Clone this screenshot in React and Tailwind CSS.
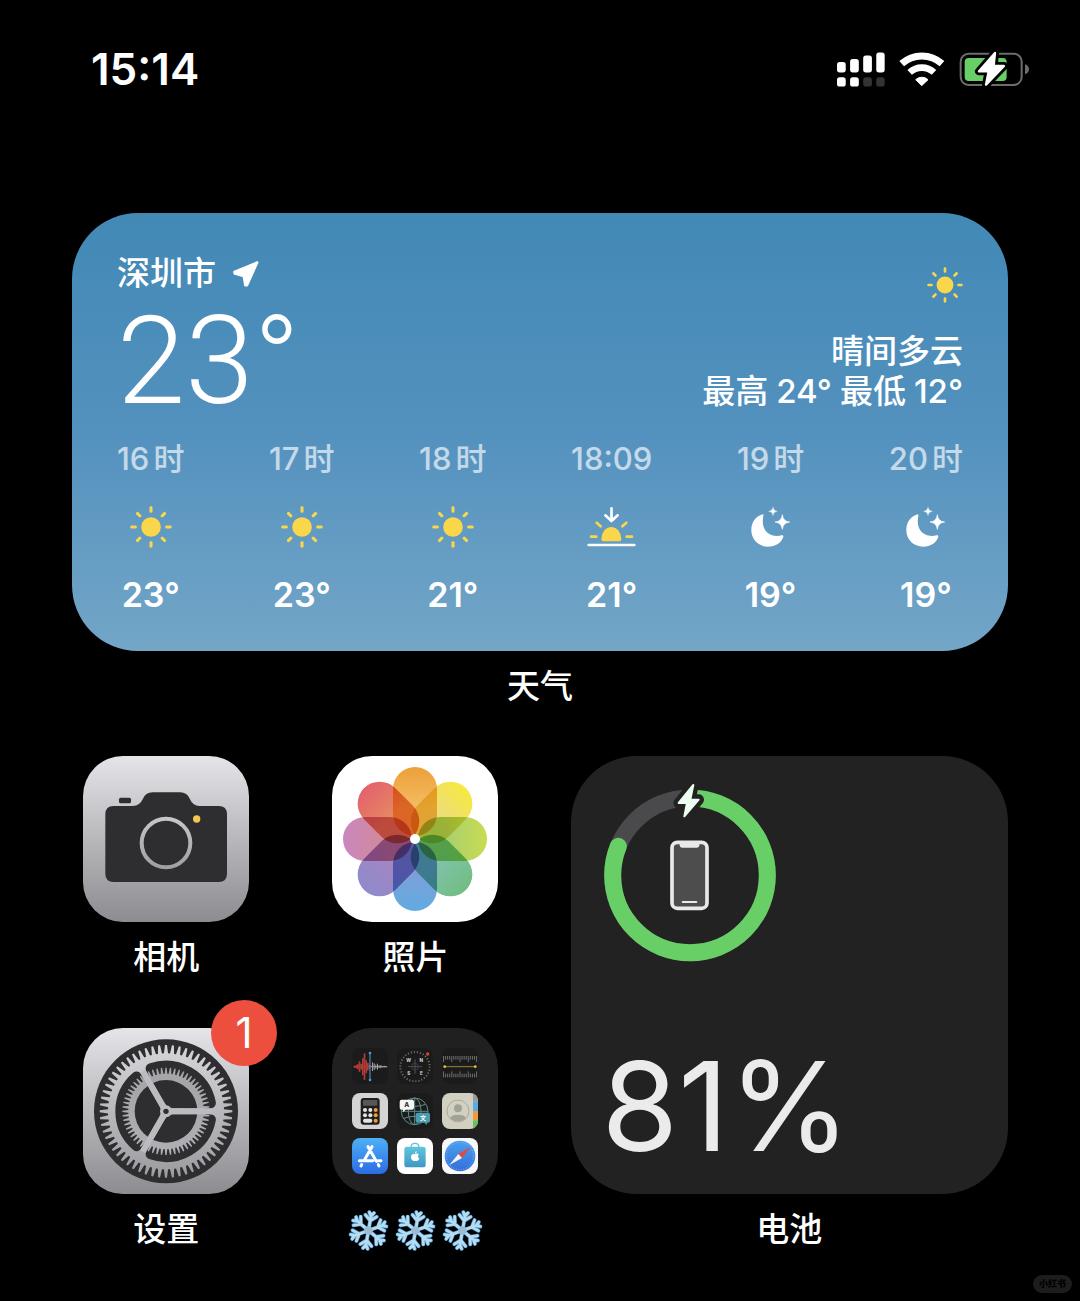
import React from "react";

const polar = (cx, cy, r, deg) => {
  const a = (deg * Math.PI) / 180;
  return `${(cx + r * Math.cos(a)).toFixed(1)} ${(cy + r * Math.sin(a)).toFixed(1)}`;
};

// Closed outline of a toothed wheel.
function gearPath(cx, cy, rBase, rTip, teeth) {
  const step = 360 / teeth;
  const pts = [];
  for (let i = 0; i < teeth; i++) {
    const a = i * step;
    pts.push(polar(cx, cy, rBase, a - step * 0.34));
    pts.push(polar(cx, cy, rTip, a - step * 0.14));
    pts.push(polar(cx, cy, rTip, a + step * 0.14));
    pts.push(polar(cx, cy, rBase, a + step * 0.34));
  }
  return `M${pts.join("L")}Z`;
}

function Signal() {
  return (
    <svg viewBox="51 65 143 104" className="h-[35px] w-12" fill="#fff" aria-label="蜂窝信号">
      <rect x="51" y="95" width="26" height="31" rx="8" />
      <rect x="90" y="86" width="26" height="40" rx="8" />
      <rect x="129" y="75" width="26" height="51" rx="8" />
      <rect x="168" y="66" width="25" height="60" rx="8" />
      <rect x="51" y="140" width="26" height="28" rx="8" />
      <rect x="90" y="140" width="26" height="28" rx="8" />
      <rect x="129" y="140" width="26" height="28" rx="8" fill="#333" />
      <rect x="168" y="140" width="25" height="28" rx="8" fill="#333" />
    </svg>
  );
}

function Wifi() {
  return (
    <svg viewBox="238 60 138 105" className="h-[35px] w-[46px]" fill="none" stroke="#fff" aria-label="无线局域网">
      <path d="M246 95A90 90 0 0 1 367 95" strokeWidth="21" />
      <path d="M270 121A54 54 0 0 1 343 121" strokeWidth="20" />
      <path d="M306 161L288 143A27 27 0 0 1 325 143Z" fill="#fff" strokeWidth="3" strokeLinejoin="round" />
    </svg>
  );
}

function BatteryStatus() {
  const bolt = "M526 66L478 121H507L499 161L553 105H522Z";
  return (
    <svg viewBox="418 57 213 114" className="h-[38px] w-[71px]" aria-label="正在充电">
      <rect x="423" y="68" width="183" height="94" rx="24" fill="none" stroke="#6d6d6d" strokeWidth="6" />
      <path d="M616 100Q628 104 628 115T616 130Z" fill="#6d6d6d" />
      <rect x="435" y="81" width="126" height="69" rx="12" fill="#67cf66" />
      <path d={bolt} fill="#000" stroke="#000" strokeWidth="24" strokeLinejoin="round" />
      <path d={bolt} fill="#fff" stroke="#fff" strokeWidth="7" strokeLinejoin="round" />
    </svg>
  );
}

function LocationArrow() {
  return (
    <svg viewBox="514 164 82 82" className="h-7 w-7" aria-hidden="true">
      <path d="M588 171L521 199L522 204L548 211L553 238L558 238Z" fill="#fff" stroke="#fff" strokeWidth="7" strokeLinejoin="round" />
    </svg>
  );
}

function Sun({ className }) {
  return (
    <svg viewBox="-62 -62 124 124" className={className} fill="#fad64a" aria-label="晴">
      <circle r="29" />
      {[0, 45, 90, 135, 180, 225, 270, 315].map((a) => (
        <rect key={a} x="-4.500" y="-61" width="9" height="19" rx="4" transform={`rotate(${a})`} />
      ))}
    </svg>
  );
}

function Sunset() {
  return (
    <svg viewBox="116 229 147 126" className="h-[42px] w-[49px]" fill="none" strokeLinecap="round" strokeLinejoin="round" aria-label="日落">
      <path d="M121 346H258M189.500 236V272M171 257L189.500 274L208 257" stroke="#fff" strokeWidth="8" />
      <path d="M159 328A30 36 0 0 1 219 328Q219 335 214 335H164Q159 335 159 328Z" fill="#fad64a" />
      <path d="M128 321H144M235 321H251M145 279L157 290M234 279L222 290" stroke="#fad64a" strokeWidth="8" />
    </svg>
  );
}

function Moon() {
  return (
    <svg viewBox="605 229 126 126" className="h-[42px] w-[42px]" fill="#fff" aria-label="夜间晴">
      <path d="M643 254C616 262 609 284 609 302C609 330 631 351 659 351C682 351 700 338 705 321Q706 315 700 317C666 325 636 304 645 259Q646 253 643 254Z" />
      <path d="M702 255Q704 275 724 277Q704 279 702 299Q700 279 680 277Q700 275 702 255Z" stroke="#fff" strokeWidth="2" />
      <path d="M674 232Q675 244 687 245Q675 246 674 258Q673 246 661 245Q673 244 674 232Z" stroke="#fff" strokeWidth="1" />
    </svg>
  );
}

function CameraIcon() {
  return (
    <svg viewBox="39 33 498 498" className="h-full w-full" aria-hidden="true">
      <defs>
        <linearGradient id="cam-ring" x1="0" y1="0" x2="0" y2="1">
          <stop offset="0" stopColor="#c6c6ca" />
          <stop offset="1" stopColor="#a09fa3" />
        </linearGradient>
      </defs>
      <path
        d="M106 208Q106 183 131 183H188Q210 182 218 163Q226 142 248 142H330Q352 142 360 163Q368 182 388 183H446Q471 183 471 208V386Q471 411 446 411H131Q106 411 106 386Z"
        fill="#2e2e31"
      />
      <rect x="147" y="158" width="36" height="17" rx="5" fill="#2e2e31" />
      <circle cx="288" cy="294" r="73" fill="none" stroke="url(#cam-ring)" strokeWidth="12" />
      <circle cx="380" cy="222" r="11" fill="#f5c84c" />
    </svg>
  );
}

const PETALS = [
  ["#eda03a", "#f4bd62", 0],
  ["#f7e840", "#ecdc80", 45],
  ["#c8dc50", "#a8cf70", 90],
  ["#72bd82", "#7fc3ad", 135],
  ["#62abe0", "#7f9fd8", 180],
  ["#8f8acb", "#a486c2", 225],
  ["#c986bd", "#d38a9a", 270],
  ["#e4626c", "#e58a62", 315],
];

function PhotosIcon() {
  return (
    <svg viewBox="-83 -83 166 166" className="isolate h-full w-full" aria-hidden="true">
      {PETALS.map(([outer, inner, a]) => (
        <g key={a} className="mix-blend-multiply" transform={`rotate(${a})`}>
          <linearGradient id={`petal-${a}`} x1="0" y1="0" x2="0" y2="1">
            <stop offset="0" stopColor={outer} />
            <stop offset="0.6" stopColor={inner} />
          </linearGradient>
          <rect x="-22" y="-72" width="44" height="69" rx="22" fill={`url(#petal-${a})`} />
        </g>
      ))}
      <circle r="5" fill="#fff" />
    </svg>
  );
}

function SettingsIcon() {
  const hole = `M${polar(0, 0, 136, 10.500)}A136 136 0 0 1 ${polar(0, 0, 136, 109.500)}L14.500 25Z`;
  return (
    <svg viewBox="-249 -250 498 498" className="h-full w-full" aria-hidden="true">
      <defs>
        <linearGradient id="gear-metal" gradientUnits="userSpaceOnUse" x1="0" y1="-200" x2="0" y2="200">
          <stop offset="0" stopColor="#d6d6da" />
          <stop offset="1" stopColor="#9c9ba0" />
        </linearGradient>
        <linearGradient id="gear-inner" gradientUnits="userSpaceOnUse" x1="0" y1="-132" x2="0" y2="132">
          <stop offset="0" stopColor="#a4a4a8" />
          <stop offset="1" stopColor="#b0afb4" />
        </linearGradient>
      </defs>
      <circle r="216" fill="#2e2e31" />
      <path d={gearPath(0, 0, 174, 199, 60)} fill="url(#gear-metal)" />
      {[0, 120, 240].map((a) => (
        <path key={a} d={hole} transform={`rotate(${a})`} fill="#2e2e31" stroke="#2e2e31" strokeWidth="32" strokeLinejoin="round" />
      ))}
      <path d={`${gearPath(0, 0, 113, 131, 60)}M94 0A94 94 0 1 0 -94 0A94 94 0 1 0 94 0Z`} fillRule="evenodd" fill="url(#gear-inner)" />
      {[0, 120, 240].map((a) => (
        <path key={a} d="M0 -11L24 -9H140V9H24L0 11Z" transform={`rotate(${a})`} fill="#bcbcc0" />
      ))}
      <circle r="18" fill="#bcbcc0" />
      <circle r="8" fill="#2e2e31" />
    </svg>
  );
}

function MiniIcon({ className, children }) {
  return (
    <svg viewBox="0 0 108 108" className={`h-9 w-9 rounded-lg ${className}`} aria-hidden="true">
      {children}
    </svg>
  );
}

const WAVE = [[5, 3], [10, 5], [15, 8], [20, 16], [25, 9], [30, 26], [35, 40], [40, 20], [45, 12], [50, 6]];
const WAVE_END = [[60, 13], [65, 10], [70, 6], [75, 9], [80, 4], [85, 5], [90, 2], [95, 3], [101, 2]];

function VoiceMemos() {
  return (
    <MiniIcon className="bg-[#1b1b1c]">
      <path d="M4 56H54" stroke="#b23a34" strokeWidth="3" />
      <path d="M54 56H106" stroke="#9a9a9d" strokeWidth="3" />
      {WAVE.map(([x, h]) => (
        <rect key={x} x={x} y={56 - h} width="5" height={h * 2} rx="2" fill="#b03a35" />
      ))}
      {WAVE_END.map(([x, h]) => (
        <rect key={x} x={x} y={56 - h} width="3" height={h * 2} fill="#a4a4a8" />
      ))}
      <path d="M54 15V96" stroke="#4c9fd6" strokeWidth="3" />
      <circle cx="54" cy="15" r="4" fill="#4c9fd6" />
      <circle cx="54" cy="96" r="4" fill="#4c9fd6" />
    </MiniIcon>
  );
}

function Compass() {
  return (
    <MiniIcon className="bg-[#1b1b1c]">
      <circle cx="54" cy="56" r="44" fill="none" stroke="#77777a" strokeWidth="6" strokeDasharray="3 6.200" />
      <path d="M54 34V78M32 56H76" stroke="#666669" strokeWidth="2" />
      <circle cx="54" cy="56" r="10" fill="none" stroke="#4a4a4d" strokeWidth="2" />
      <circle cx="92" cy="18" r="5" fill="#d8433a" />
      <g fill="#dcdcdc" fontFamily="Inter, sans-serif" fontSize="14" fontWeight="700" textAnchor="middle">
        <text x="35" y="41">W</text>
        <text x="73" y="41">N</text>
        <text x="35" y="81">S</text>
        <text x="73" y="81">E</text>
      </g>
    </MiniIcon>
  );
}

function Measure() {
  return (
    <MiniIcon className="bg-[#1b1b1c]">
      {Array.from({ length: 17 }, (_, i) => {
        const len = i % 4 === 0 ? 18 : 11;
        return (
          <path key={i} d={`M${4.500 + i * 6.200} 24V${24 + len}M${4.500 + i * 6.200} 88V${88 - len}`} stroke="#98989b" strokeWidth="2" />
        );
      })}
      <path d="M8 56H100" stroke="#9c8532" strokeWidth="3" />
      <circle cx="8" cy="56" r="4" fill="#e9c23c" />
      <circle cx="100" cy="56" r="4" fill="#e9c23c" />
    </MiniIcon>
  );
}

function Calculator() {
  return (
    <MiniIcon className="bg-[#d4d4d4]">
      <rect x="26" y="15" width="57" height="80" rx="9" fill="#1f1f21" />
      <rect x="33" y="21" width="43" height="17" rx="2" fill="#57575a" />
      {[39, 55].map((x) => (
        <g key={x} fill="#e4e4e6">
          <circle cx={x} cy="51" r="6" />
          <circle cx={x} cy="67" r="6" />
        </g>
      ))}
      {[51, 67, 83].map((y) => (
        <circle key={y} cx="71" cy={y} r="6" fill="#f29d38" />
      ))}
      <rect x="33" y="77" width="28" height="12" rx="6" fill="#e4e4e6" />
    </MiniIcon>
  );
}

function Translate() {
  return (
    <MiniIcon className="bg-[#1b1b1c]">
      <g fill="none" stroke="#5d8b87" strokeWidth="3">
        <circle cx="53" cy="55" r="40" />
        <ellipse cx="53" cy="55" rx="19" ry="40" />
        <path d="M13 55H93M53 15V95M20 34Q53 46 86 34M20 76Q53 64 86 76" />
      </g>
      <path d="M14 20H45Q51 20 51 26V44Q51 50 45 50H26L18 58V50H14Q8 50 8 44V26Q8 20 14 20Z" fill="#f4f4f4" />
      <path d="M62 59H93Q99 59 99 65V83Q99 89 93 89H90V96L82 89H62Q56 89 56 83V65Q56 59 62 59Z" fill="#4a9cae" />
      <text x="29" y="43" fontFamily="Inter, sans-serif" fontSize="20" fontWeight="700" textAnchor="middle" fill="#222">A</text>
      <text x="78" y="81" fontFamily="'Noto Sans CJK SC', sans-serif" fontSize="18" fontWeight="700" textAnchor="middle" fill="#fff">文</text>
    </MiniIcon>
  );
}

function Contacts() {
  return (
    <MiniIcon className="bg-[#d1d0c1]">
      <rect x="93" y="0" width="15" height="26" fill="#9b9b98" />
      <rect x="93" y="26" width="15" height="28" fill="#55aee6" />
      <rect x="93" y="54" width="15" height="28" fill="#ef9b3c" />
      <rect x="93" y="82" width="15" height="26" fill="#62c35c" />
      <circle cx="48" cy="54" r="33" fill="none" stroke="#aaa99d" strokeWidth="3" />
      <circle cx="48" cy="46" r="12" fill="#a3a296" />
      <path d="M24 75Q28 65 48 65T72 75Q62 85 48 85T24 75Z" fill="#a3a296" />
    </MiniIcon>
  );
}

function AppStore() {
  return (
    <MiniIcon className="bg-linear-to-b from-[#4fb0f5] to-[#2d6be4]">
      <g stroke="#fff" strokeWidth="9" strokeLinecap="round">
        <path d="M48 26L73 70M79 80L81 84M60 26L36 68M29 80L27 84M22 68H62M78 68H87" />
      </g>
    </MiniIcon>
  );
}

function AppleStore() {
  return (
    <MiniIcon className="bg-white">
      <defs>
        <linearGradient id="bag" x1="0" y1="0" x2="0" y2="1">
          <stop offset="0" stopColor="#5fc6dd" />
          <stop offset="1" stopColor="#3f97c4" />
        </linearGradient>
      </defs>
      <path d="M42 28Q42 16 54 16T66 28" fill="none" stroke="#62bfd6" strokeWidth="4" />
      <rect x="22" y="26" width="64" height="62" rx="8" fill="url(#bag)" />
      <path d="M54 49Q61 44 66 50Q59 54 67 62Q62 72 54 68Q46 72 42 60Q42 45 54 49ZM54 47Q53 41 59 39Q60 45 54 47Z" fill="#fff" />
    </MiniIcon>
  );
}

function Safari() {
  return (
    <MiniIcon className="bg-[#f8f8f8]">
      <defs>
        <linearGradient id="safari" x1="0" y1="0" x2="0" y2="1">
          <stop offset="0" stopColor="#4a9ff0" />
          <stop offset="1" stopColor="#356fd8" />
        </linearGradient>
      </defs>
      <circle cx="54" cy="54" r="46" fill="url(#safari)" />
      <circle cx="54" cy="54" r="41" fill="none" stroke="#a7cbf4" strokeWidth="4" strokeDasharray="1 4.300" />
      <path d="M86 27L49 48L60 60Z" fill="#e5483f" />
      <path d="M22 81L49 48L60 60Z" fill="#f5f5f5" />
    </MiniIcon>
  );
}

function FolderIcon() {
  return (
    <span className="grid h-full w-full grid-cols-3 place-content-center justify-items-center gap-[9px] px-5">
      <VoiceMemos />
      <Compass />
      <Measure />
      <Calculator />
      <Translate />
      <Contacts />
      <AppStore />
      <AppleStore />
      <Safari />
    </span>
  );
}

function Snowflake() {
  return (
    <svg viewBox="-62 -62 124 124" className="h-[41px] w-[41px]" fill="none" strokeLinecap="round" strokeLinejoin="round" aria-hidden="true">
      {["#5f9fd0", "#b4dcf3"].map((color, i) => (
        <g key={color} stroke={color} strokeWidth={i === 0 ? 12 : 8}>
          {[10, 70, 130, 190, 250, 310].map((a) => (
            <path key={a} d="M0 0V-50M0 -30L-17 -45M0 -30L17 -45M0 -44L-7 -55M0 -44L7 -55" transform={`rotate(${a})`} />
          ))}
        </g>
      ))}
      <circle r="13" fill="#8fc0e2" />
      <circle r="8" fill="#a5b9c9" />
    </svg>
  );
}

const HOURS = [
  { time: "16", unit: "时", icon: "sun", temp: "23°" },
  { time: "17", unit: "时", icon: "sun", temp: "23°" },
  { time: "18", unit: "时", icon: "sun", temp: "21°" },
  { time: "18:09", icon: "sunset", temp: "21°" },
  { time: "19", unit: "时", icon: "moon", temp: "19°" },
  { time: "20", unit: "时", icon: "moon", temp: "19°" },
];

function HourIcon({ name }) {
  if (name === "sunset") return <Sunset />;
  if (name === "moon") return <Moon />;
  return <Sun className="h-[42px] w-[42px]" />;
}

function WeatherWidget() {
  return (
    <section aria-label="天气" className="rounded-[66px] bg-linear-to-b from-[#4289b6] via-[#5391be] to-[#73a6c7] px-[45px] pt-[38px] pb-9">
      <div className="flex justify-between">
        <div>
          <div className="flex h-[46px] items-center gap-4 text-[33px] font-medium">
            <span>深圳市</span>
            <LocationArrow />
          </div>
          <div className="mt-2 font-[Roboto,sans-serif] text-[123px] leading-[112px] font-light">23°</div>
        </div>
        <div className="flex flex-col items-end pt-4 text-[33px] leading-10 font-medium">
          <Sun className="h-9 w-9" />
          <p className="mt-7">晴间多云</p>
          <p className="flex gap-2">
            <span>最高</span>
            <span>24°</span>
            <span>最低</span>
            <span>12°</span>
          </p>
        </div>
      </div>
      <ul className="mt-[22px] flex justify-between">
        {HOURS.map((h) => (
          <li key={h.time} className="flex flex-col items-center">
            <span className="flex gap-1 text-[31px] leading-10 font-medium text-white/65">
              <span>{h.time}</span>
              {h.unit && <span>{h.unit}</span>}
            </span>
            <span className="mt-[27px]">
              <HourIcon name={h.icon} />
            </span>
            <span className="mt-[27px] text-[34px] leading-10 font-semibold">{h.temp}</span>
          </li>
        ))}
      </ul>
    </section>
  );
}

function AppTile({ label, tile, badge, ariaLabel, children }) {
  return (
    <button type="button" aria-label={ariaLabel} className="flex flex-col items-center">
      <span className="relative">
        <span className={`block h-[166px] w-[166px] overflow-hidden rounded-[40px] ${tile}`}>{children}</span>
        {badge && (
          <span className="absolute -top-7 -right-7 flex h-[66px] w-[66px] items-center justify-center rounded-full bg-[#ec4f3d] text-[42px] leading-none">
            {badge}
          </span>
        )}
      </span>
      <span className="mt-3 flex h-12 items-center justify-center gap-1.5 text-[33px] font-medium">{label}</span>
    </button>
  );
}

function BatteryRing({ percent }) {
  const bolt = "M369 104L325 158H350L342 198L385 148H360Z";
  const length = 2 * Math.PI * 232;
  return (
    <svg viewBox="95 95 528 543" className="h-[181px] w-44" aria-hidden="true">
      <g fill="none" strokeWidth="51" transform="rotate(-90 359 375)">
        <circle cx="359" cy="375" r="232" stroke="#4a4a4d" />
        <circle cx="359" cy="375" r="232" stroke="#67cf66" strokeLinecap="round" strokeDasharray={`${(length * percent) / 100} ${length}`} />
      </g>
      <path d={bolt} fill="#222" stroke="#222" strokeWidth="32" strokeLinejoin="round" />
      <path d={bolt} fill="#ecfdf1" stroke="#ecfdf1" strokeWidth="6" strokeLinejoin="round" />
      <rect x="305" y="276" width="105" height="198" rx="16" fill="#4d4d4e" stroke="#e9e9e9" strokeWidth="11" />
      <path d="M328 278H387V285Q387 292 380 292H335Q328 292 328 285Z" fill="#e9e9e9" />
      <path d="M337 455H378" stroke="#e9e9e9" strokeWidth="6" strokeLinecap="round" />
    </svg>
  );
}

function BatteryWidget() {
  return (
    <section aria-label="电池" className="col-span-2 row-span-2 flex flex-col">
      <div className="flex grow flex-col justify-between rounded-[66px] bg-[#222] px-[31px] pt-[26px] pb-7">
        <BatteryRing percent={81} />
        <div className="text-[124px] leading-[120px] font-[380] text-[#ebebeb]">81%</div>
      </div>
      <p className="mt-3 flex h-12 items-center justify-center text-[33px] font-medium">电池</p>
    </section>
  );
}

export default function App() {
  return (
    <div className="relative min-h-screen overflow-hidden bg-black font-[Inter,'Noto_Sans_CJK_SC',sans-serif] text-white">
      <header className="flex h-[138px] items-center justify-between pr-[50px] pl-[91px]">
        <time className="text-[44px] font-semibold">15:14</time>
        <div className="flex items-center gap-3.5">
          <Signal />
          <Wifi />
          <BatteryStatus />
        </div>
      </header>
      <main className="mt-[75px] px-18">
        <WeatherWidget />
        <p className="mt-3 flex h-12 items-center justify-center text-[33px] font-medium">天气</p>
        <div className="mt-[45px] grid grid-cols-4 gap-x-[61px] gap-y-[46px]">
          <AppTile label="相机" tile="bg-linear-to-b from-[#e5e4e9] to-[#8d8c91]">
            <CameraIcon />
          </AppTile>
          <AppTile label="照片" tile="bg-white">
            <PhotosIcon />
          </AppTile>
          <BatteryWidget />
          <AppTile label="设置" tile="bg-linear-to-b from-[#e5e4e9] to-[#8d8c91]" badge="1">
            <SettingsIcon />
          </AppTile>
          <AppTile
            ariaLabel="❄️❄️❄️"
            tile="bg-[#202020]"
            label={
              <>
                <Snowflake />
                <Snowflake />
                <Snowflake />
              </>
            }
          >
            <FolderIcon />
          </AppTile>
        </div>
      </main>
      <span className="absolute right-2 bottom-2 rounded-full bg-[#1d1d1d] px-1.5 text-[9px] leading-[18px] font-black text-black">小红书</span>
    </div>
  );
}
